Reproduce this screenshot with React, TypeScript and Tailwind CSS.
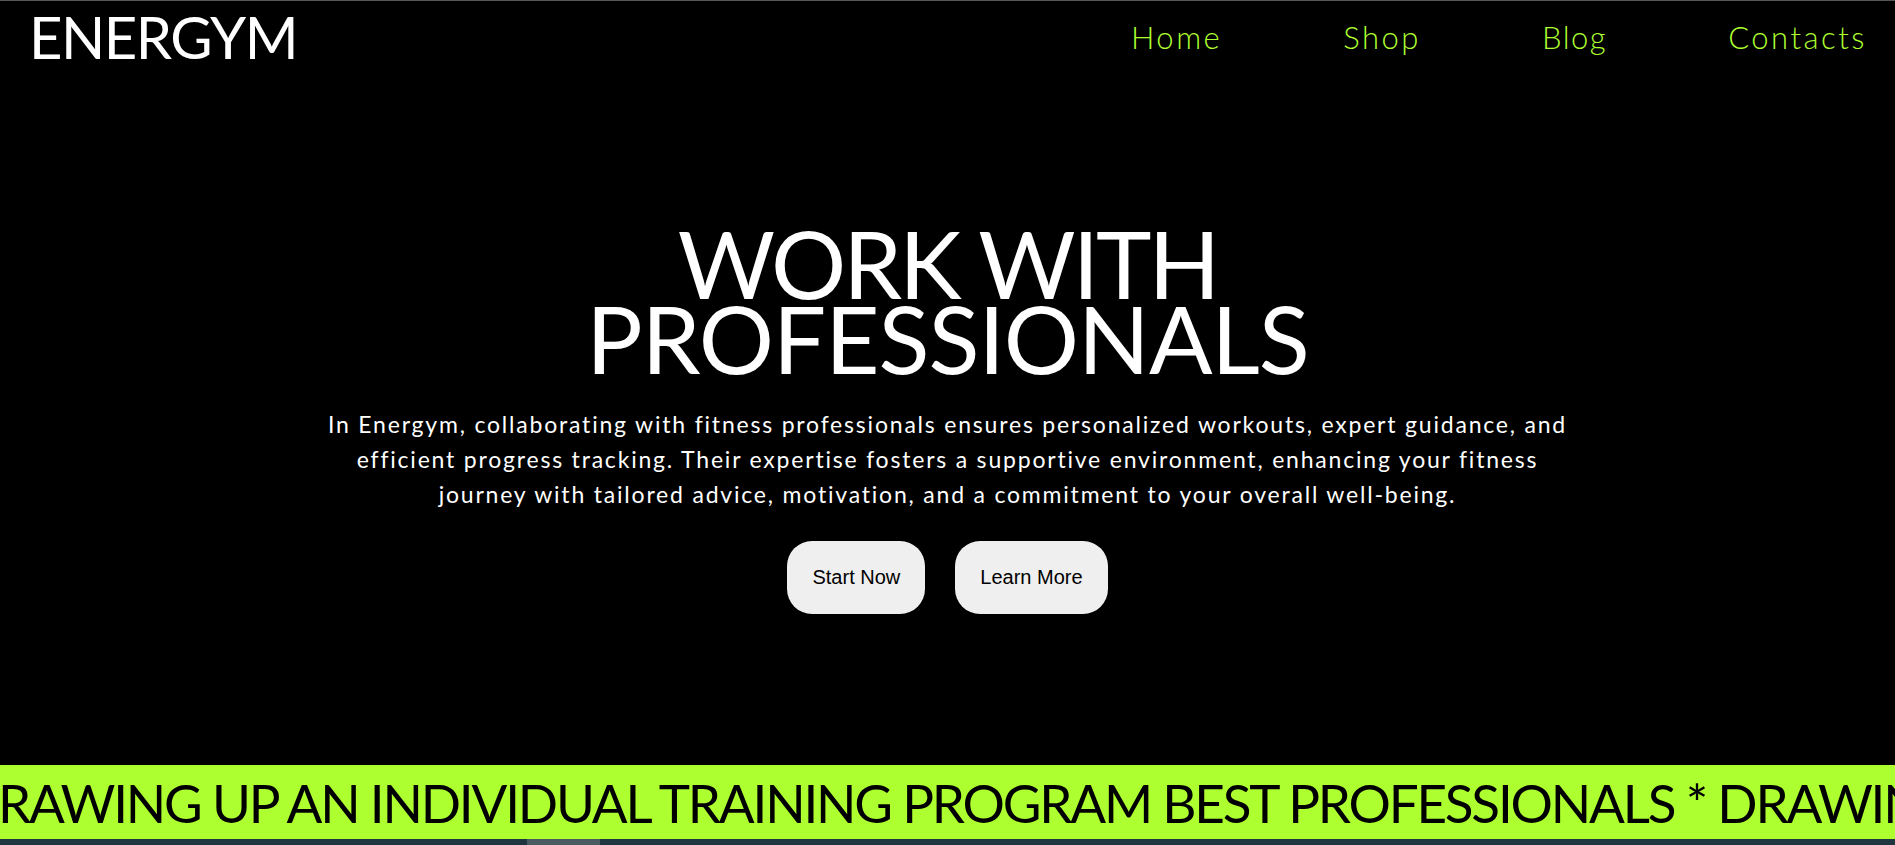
import React from 'react';

const marquee =
  'DRAWING UP AN INDIVIDUAL TRAINING PROGRAM BEST PROFESSIONALS * DRAWING UP AN INDIVIDUAL TRAINING PROGRAM BEST PROFESSIONALS *';

export default function App() {
  return (
    <div className="h-[845px] w-full bg-black text-white flex flex-col overflow-hidden font-['Lato',sans-serif]">
      {/* Header */}
      <header className="h-[78px] pb-[5px] border-t border-[#555] flex items-center justify-between pl-[29px] pr-[28px]">
        <span className="text-[58px] leading-none tracking-[-1.5px] text-white">ENERGYM</span>
        <nav className="flex items-center gap-[121px] text-[31px] font-light tracking-[2.5px] text-[#adff2f] leading-none">
          <a href="#">Home</a>
          <a href="#">Shop</a>
          <a href="#" className="tracking-[1.5px]">Blog</a>
          <a href="#">Contacts</a>
        </nav>
      </header>

      {/* Hero */}
      <section className="flex-1 flex flex-col items-center pt-[147px]">
        <h1 className="text-[94px] leading-[75px] text-center tracking-[-1px]">
          <span className="tracking-[-3px]">WORK WITH</span>
          <br />
          PROFESSIONALS
        </h1>
        <p className="mt-[32px] text-[23px] leading-[35px] tracking-[1.8px] text-center">
          In Energym, collaborating with fitness professionals ensures personalized workouts, expert guidance, and
          <br />
          efficient progress tracking. Their expertise fosters a supportive environment, enhancing your fitness
          <br />
          journey with tailored advice, motivation, and a commitment to your overall well-being.
        </p>
        <div className="mt-[29px] flex gap-[30px] font-['Liberation_Sans',Arial,sans-serif] text-[20px] leading-[23px] text-black">
          <button className="bg-[#efefef] rounded-[25px] px-[25px] py-[25px]">Start Now</button>
          <button className="bg-[#efefef] rounded-[25px] px-[25px] py-[25px]">Learn More</button>
        </div>
      </section>

      {/* Marquee band */}
      <div className="h-[74px] bg-[#adff2f] flex items-center overflow-hidden">
        <span className="whitespace-nowrap text-black text-[53px] tracking-[-2.2px] leading-none -ml-[40px]">{marquee}</span>
      </div>
      <div className="h-[6px] bg-[#1f3540] flex">
        <div className="w-[527px]" />
        <div className="w-[73px] bg-[#4a5b62]" />
      </div>
    </div>
  );
}
